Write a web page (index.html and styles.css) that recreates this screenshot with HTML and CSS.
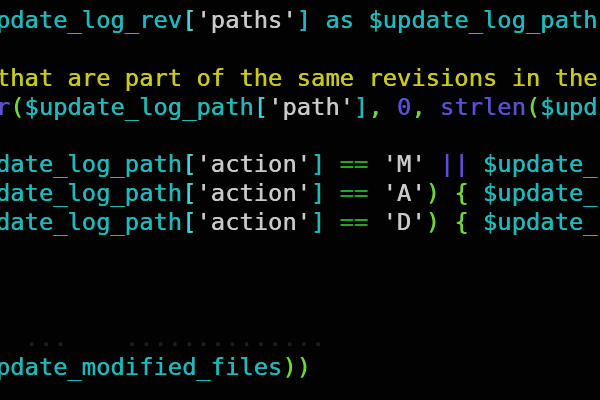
FILE: index.html
```html
<!DOCTYPE html>
<html>
<head>
<meta charset="utf-8">
<link rel="stylesheet" href="styles.css">
</head>
<body>
<div class="screen">
<div class="code">
<div class="ln"> <span class="v">update_log_rev</span><span class="b">[</span><span class="s">'paths'</span><span class="v">]</span> <span class="v">as</span> <span class="v">$update_log_path</span></div>
<div class="ln"> </div>
<div class="ln c">  that are part of the same revisions in the</div>
<div class="ln">  <span class="f">r</span><span class="g">(</span><span class="v">$update_log_path</span><span class="b">[</span><span class="s">'path'</span><span class="v">]</span><span class="g">,</span> <span class="f">0</span><span class="g">,</span> <span class="f">strlen</span><span class="g">(</span><span class="v">$upd</span></div>
<div class="ln"> </div>
<div class="ln"><span class="v">update_log_path</span><span class="b">[</span><span class="s">'action'</span><span class="v">]</span> <span class="op">==</span> <span class="s">'M'</span> <span class="f">||</span> <span class="v">$update_</span></div>
<div class="ln"><span class="v">update_log_path</span><span class="b">[</span><span class="s">'action'</span><span class="v">]</span> <span class="op">==</span> <span class="s">'A'</span><span class="g">)</span> <span class="g">{</span> <span class="v">$update_</span></div>
<div class="ln"><span class="v">update_log_path</span><span class="b">[</span><span class="s">'action'</span><span class="v">]</span> <span class="op">==</span> <span class="s">'D'</span><span class="g">)</span> <span class="g">{</span> <span class="v">$update_</span></div>
<div class="ln"> </div>
<div class="ln"> </div>
<div class="ln"> </div>
<div class="ln ghost">    ...    ..............</div>
<div class="ln"> <span class="v">update_modified_files</span><span class="g">))</span></div>
</div>
</div>
</body>
</html>
```
FILE: styles.css
```css
html, body {
  margin: 0;
  padding: 0;
  background: #000;
}
.screen {
  width: 600px;
  height: 400px;
  overflow: hidden;
  background: #020202;
}
.code {
  margin: 0 0 0 -33px;
  padding-top: 6px;
  font-family: "DejaVu Sans Mono", "Liberation Mono", monospace;
  font-size: 23.8px;
  line-height: 28.9px;
  color: #20b8b8;
  filter: blur(0.4px);
  text-shadow: 0.5px 0 0 currentColor;
}
.ln {
  white-space: pre;
  height: 28.9px;
}
.v { color: #1fb9bb; }
.b { color: #3dd6d4; }
.s { color: #c9c9c9; }
.c { color: #c9c91c; }
.f { color: #5a4fd6; }
.g { color: #72d63a; }
.op { color: #25a528; }
.ghost { color: #1e1e1e; }
```
